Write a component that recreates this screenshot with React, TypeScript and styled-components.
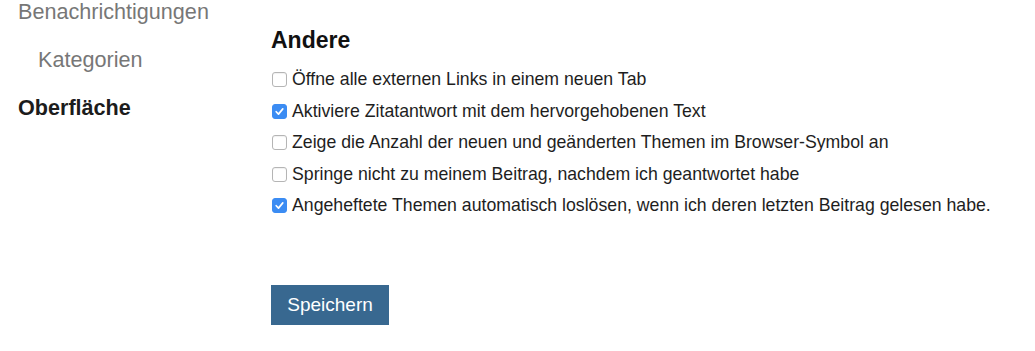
import styled, { createGlobalStyle } from "styled-components";

const GlobalStyle = createGlobalStyle`
  html, body {
    margin: 0;
    padding: 0;
    background: #ffffff;
  }
  body {
    font-family: "Liberation Sans", Arial, Helvetica, sans-serif;
    color: #222222;
  }
`;

const Page = styled.div`
  display: flex;
  width: 1035px;
  height: 351px;
  overflow: hidden;
`;

const Sidebar = styled.nav`
  width: 271px;
  flex-shrink: 0;
  display: flex;
  flex-direction: column;
  gap: 24px;
  padding-top: 0;
`;

const NavItem = styled.a<{ $active?: boolean; $indent?: boolean }>`
  display: block;
  font-size: 21.6px;
  line-height: 24px;
  padding-left: ${(p) => (p.$indent ? "38px" : "18px")};
  color: ${(p) => (p.$active ? "#1c1c1c" : "#777777")};
  font-weight: ${(p) => (p.$active ? 700 : 400)};
  text-decoration: none;
  cursor: pointer;
`;

const Main = styled.section`
  display: flex;
  flex-direction: column;
  padding-top: 28px;
`;

const Heading = styled.h2`
  margin: 0 0 12px;
  font-size: 23px;
  line-height: 24px;
  font-weight: 700;
  color: #111111;
`;

const OptionList = styled.div`
  display: flex;
  flex-direction: column;
`;

const Row = styled.label`
  display: flex;
  align-items: center;
  height: 31.5px;
  font-size: 17.7px;
  color: #1e1e1e;
  cursor: pointer;
`;

const Box = styled.span<{ $checked: boolean }>`
  width: 15px;
  height: 15px;
  margin-left: 1px;
  margin-right: 5px;
  border-radius: 3px;
  box-sizing: border-box;
  display: flex;
  align-items: center;
  justify-content: center;
  flex-shrink: 0;
  background: ${(p) => (p.$checked ? "#3b8cf3" : "#ffffff")};
  border: 1px solid ${(p) => (p.$checked ? "#3b8cf3" : "#b5b5b5")};
  box-shadow: ${(p) => (p.$checked ? "none" : "inset 0 1px 1px rgba(0,0,0,0.06)")};
`;

const SaveButton = styled.button`
  margin-top: 63px;
  width: 118px;
  height: 40px;
  background: #386890;
  color: #ffffff;
  border: none;
  border-radius: 0;
  font-family: "Liberation Sans", Arial, Helvetica, sans-serif;
  font-size: 19px;
  cursor: pointer;
`;

function Checkbox({ checked }: { checked: boolean }) {
  return (
    <Box $checked={checked}>
      {checked && (
        <svg width="11" height="11" viewBox="0 0 10 10">
          <path
            d="M2 5.2 L4.1 7.4 L8 2.6"
            fill="none"
            stroke="#ffffff"
            strokeWidth="1.5"
            strokeLinecap="round"
            strokeLinejoin="round"
          />
        </svg>
      )}
    </Box>
  );
}

const options = [
  { label: "Öffne alle externen Links in einem neuen Tab", checked: false },
  { label: "Aktiviere Zitatantwort mit dem hervorgehobenen Text", checked: true },
  {
    label: "Zeige die Anzahl der neuen und geänderten Themen im Browser-Symbol an",
    checked: false,
  },
  { label: "Springe nicht zu meinem Beitrag, nachdem ich geantwortet habe", checked: false },
  {
    label:
      "Angeheftete Themen automatisch loslösen, wenn ich deren letzten Beitrag gelesen habe.",
    checked: true,
  },
];

export default function App() {
  return (
    <>
      <GlobalStyle />
      <Page>
        <Sidebar>
          <NavItem>Benachrichtigungen</NavItem>
          <NavItem $indent>Kategorien</NavItem>
          <NavItem $active>Oberfläche</NavItem>
        </Sidebar>
        <Main>
          <Heading>Andere</Heading>
          <OptionList>
            {options.map((o) => (
              <Row key={o.label}>
                <Checkbox checked={o.checked} />
                {o.label}
              </Row>
            ))}
          </OptionList>
          <div>
            <SaveButton>Speichern</SaveButton>
          </div>
        </Main>
      </Page>
    </>
  );
}
